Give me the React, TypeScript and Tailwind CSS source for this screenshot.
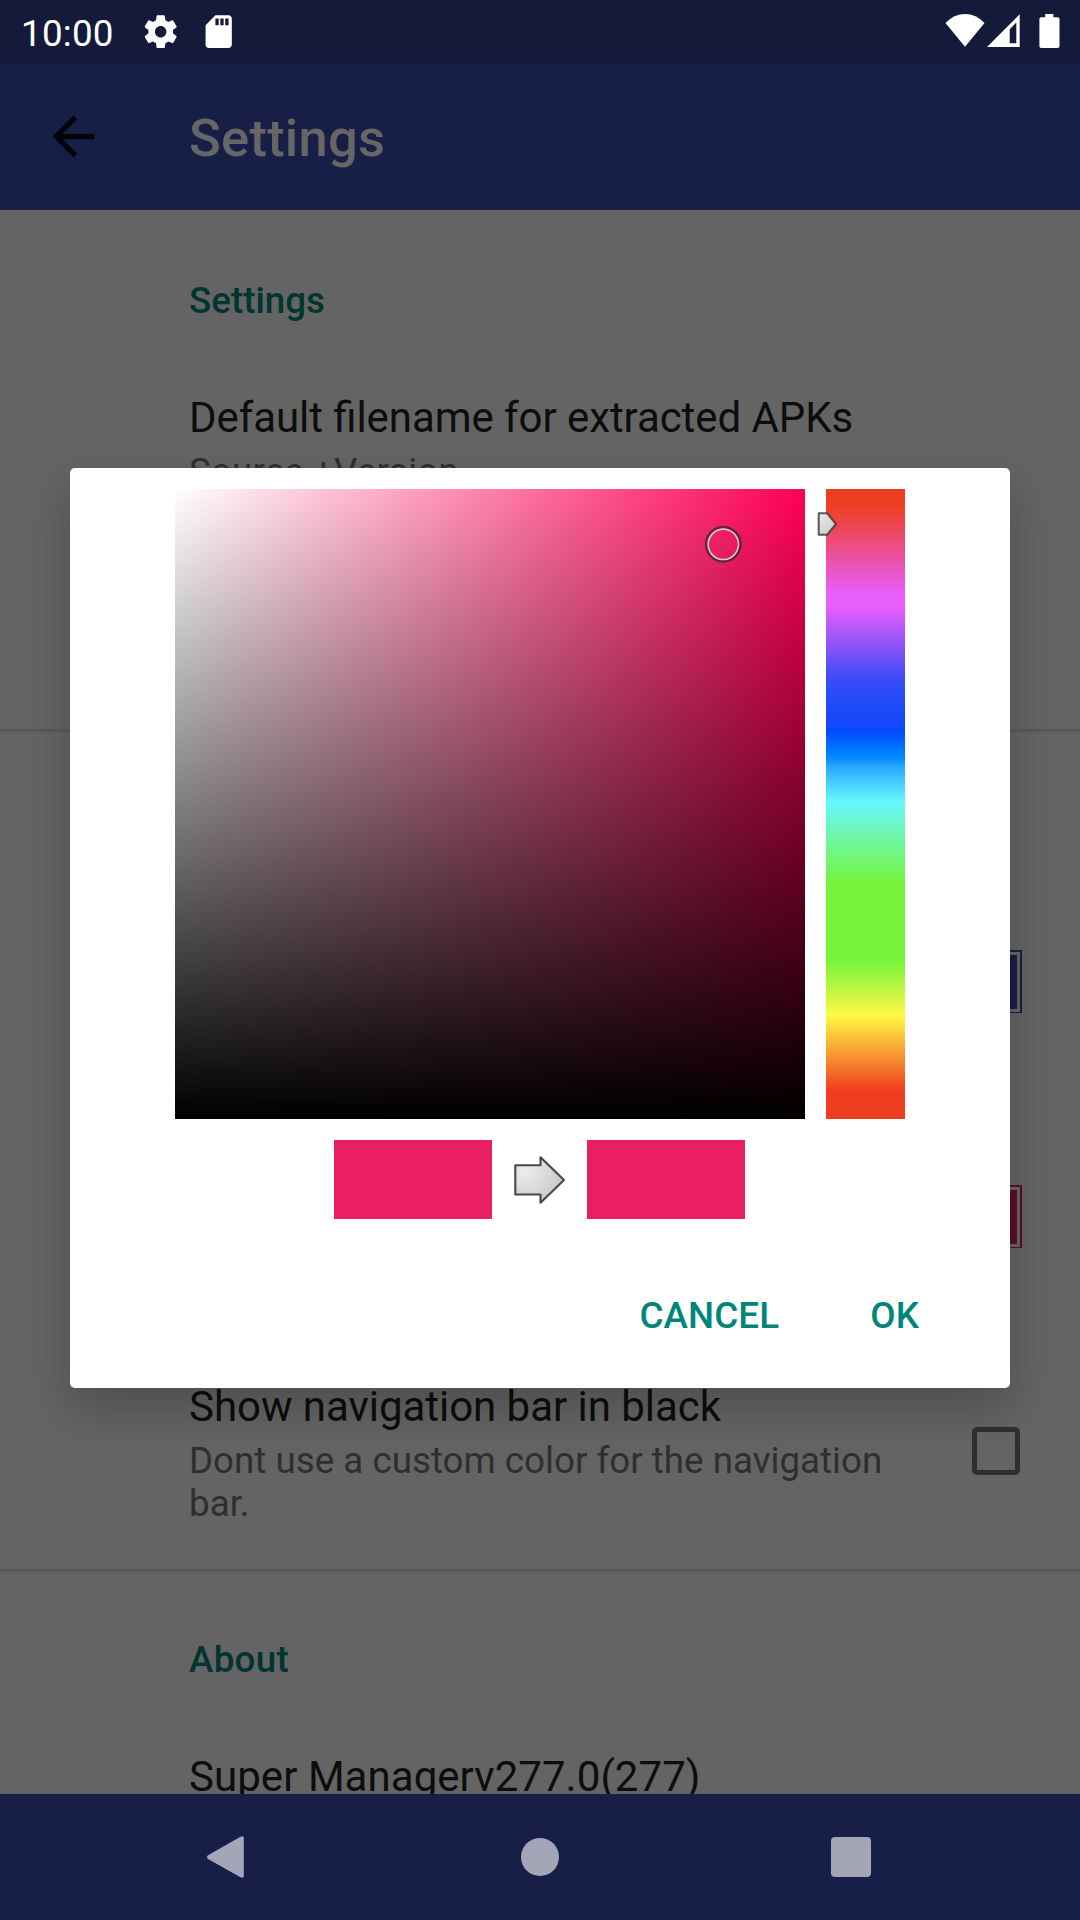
import React from "react";

function StatusBar() {
  return (
    <header className="flex h-[63px] items-start bg-[#141a39] pl-[21px] text-white">
      <div className="mt-[12px] w-[120px] text-[36.75px] leading-[43px] tracking-[0.25px]">10:00</div>
      <svg className="mt-[12px] h-[39.4px] w-[39.4px]" viewBox="0 0 24 24" fill="currentColor">
        <path d="M19.43 12.98c.04-.32.07-.64.07-.98s-.03-.66-.07-.98l2.11-1.65c.19-.15.24-.42.12-.64l-2-3.46c-.12-.22-.39-.3-.61-.22l-2.49 1c-.52-.4-1.08-.73-1.69-.98l-.38-2.65C14.46 2.18 14.25 2 14 2h-4c-.25 0-.46.18-.49.42l-.38 2.65c-.61.25-1.17.59-1.69.98l-2.49-1c-.23-.09-.49 0-.61.22l-2 3.46c-.13.22-.07.49.12.64l2.11 1.65c-.04.32-.07.65-.07.98s.03.66.07.98l-2.11 1.65c-.19.15-.24.42-.12.64l2 3.46c.12.22.39.3.61.22l2.49-1c.52.4 1.08.73 1.69.98l.38 2.65c.03.24.24.42.49.42h4c.25 0 .46-.18.49-.42l.38-2.65c.61-.25 1.17-.59 1.69-.98l2.49 1c.23.09.49 0 .61-.22l2-3.46c.12-.22.07-.49-.12-.64l-2.11-1.65zM12 15.5c-1.93 0-3.5-1.57-3.5-3.5s1.57-3.5 3.5-3.5 3.5 1.57 3.5 3.5-1.57 3.5-3.5 3.5z" />
      </svg>
      <svg className="mt-[12px] ml-[18.5px] h-[39.4px] w-[39.4px]" viewBox="0 0 24 24" fill="currentColor">
        <path d="M18 2h-8L4.02 8 4 20c0 1.1.9 2 2 2h12c1.1 0 2-.9 2-2V4c0-1.1-.9-2-2-2zm-6 6h-2V4h2v4zm3 0h-2V4h2v4zm3 0h-2V4h2v4z" />
      </svg>
      <div className="mt-[14px] mr-[20.5px] ml-auto flex items-start">
        <svg className="h-[34px] w-[40px]" viewBox="0 0 40 34" fill="currentColor">
          <path d="M0.5 9Q9 0 20 0T39.5 9L20 32.7Z" />
        </svg>
        <svg className="ml-[2.5px] h-[34px] w-[33px]" viewBox="0 0 33 34" fill="currentColor">
          <path fillRule="evenodd" d="M0 33H32.7V0.3ZM22.7 29.3V15.3L29.3 8.5V29.3Z" />
        </svg>
        <svg className="ml-[18.5px] h-[34px] w-[21px]" viewBox="0 0 21 34" fill="currentColor">
          <path d="M6.2 0H14.4V3.3H18.6Q20.5 3.3 20.5 5V32.2Q20.5 33.9 18.6 33.9H2.2Q0.4 33.9 0.4 32.2V5Q0.4 3.3 2.2 3.3H6.2Z" />
        </svg>
      </div>
    </header>
  );
}

function AppBar() {
  return (
    <div className="flex h-[147px] items-center bg-[#181f46] pl-[42px]">
      <svg className="h-[63px] w-[63px]" viewBox="0 0 24 24" fill="#030409">
        <path d="M20 11H7.83l5.59-5.59L12 4l-8 8 8 8 1.41-1.41L7.83 13H20v-2z" />
      </svg>
      <h1 className="mt-[3px] ml-[84px] text-[52.5px] leading-[62px] font-medium tracking-[0.25px] text-[#666666]">
        Settings
      </h1>
    </div>
  );
}

function Category({ children }: { children: React.ReactNode }) {
  return <h2 className="text-[36.75px] leading-[43px] font-medium text-[#00362f]">{children}</h2>;
}

function Title({ children }: { children: React.ReactNode }) {
  return (
    <div className="text-[42px] leading-[49px] tracking-[-0.04px] whitespace-nowrap text-[#0d0d0d]">{children}</div>
  );
}

function Summary({ children }: { children: React.ReactNode }) {
  return <div className="mt-2 text-[36.75px] leading-[43px] text-[#2f2f2f]">{children}</div>;
}

function SettingsList() {
  return (
    <main className="flex h-[1584px] flex-col overflow-hidden bg-[#646464]">
      <section className="h-[522px] shrink-0 border-b-[3px] border-[#595959] pt-[69px] pl-[189px]">
        <Category>Settings</Category>
        <div className="mt-[71px]">
          <Title>
            <span className="tracking-[-0.07px] [font-feature-settings:'liga'_1]">
              Default filename for extracted APKs
            </span>
          </Title>
          <Summary>
            <span className="tracking-[0.15px]">Source +Version</span>
          </Summary>
        </div>
      </section>

      <section className="h-[840px] shrink-0 border-b-[3px] border-[#595959] pt-[218px] pr-[58px] pl-[189px]">
        <div className="flex h-[235px] items-start justify-end">
          <div className="h-[63px] w-[63px] border-2 border-b border-[#181f46] bg-[#666666] p-[3px]">
            <div className="h-full bg-[#181f46]" />
          </div>
        </div>
        <div className="flex h-[197px] items-start justify-end">
          <div className="h-[63px] w-[63px] border-2 border-b border-[#5d0c28] bg-[#666666] p-[3px]">
            <div className="h-full bg-[#5d0c28]" />
          </div>
        </div>
        <div className="flex items-start justify-between">
          <div className="w-[720px]">
            <Title>Show navigation bar in black</Title>
            <Summary>Dont use a custom color for the navigation bar.</Summary>
          </div>
          <div className="mt-[45px] mr-[2px] h-[48px] w-[48px] rounded-[5px] border-[5.25px] border-[#2f2f2f]" />
        </div>
      </section>

      <section className="shrink-0 pt-[66px] pl-[189px]">
        <Category>
          <span className="tracking-[0.3px]">About</span>
        </Category>
        <div className="mt-[71px]">
          <Title>
            <span className="tracking-[0.05px]">Super Managerv277.0(277)</span>
          </Title>
        </div>
      </section>
    </main>
  );
}

function NavigationBar() {
  return (
    <nav className="flex h-[126px] items-center bg-[#181f46] pl-[206px] text-[#a3a6b6]">
      <svg className="h-[44px] w-[40px]" viewBox="0 0 40 44" fill="currentColor">
        <path d="M2 20.3L34.5 1.7Q37.8 0.5 37.8 3V41Q37.8 43.5 34.5 42.3L2 23.9Q0 22 2 20.3Z" />
      </svg>
      <div className="ml-[275px] h-[38px] w-[38px] rounded-full bg-[#a3a6b6]" />
      <div className="ml-[272px] h-[40px] w-[40px] rounded-[4px] bg-[#a3a6b6]" />
    </nav>
  );
}

function ColorPickerDialog() {
  return (
    <div className="absolute inset-x-0 top-[63px] bottom-[127px] flex items-center justify-center">
      <div
        role="dialog"
        className="flex h-[920px] w-[940px] flex-col rounded-[5px] bg-white shadow-[0_20px_45px_rgba(0,0,0,0.22)]"
      >
        <div className="flex pt-[21px] pl-[105px]">
          <div className="relative h-[630px] w-[630px] bg-[linear-gradient(to_top,#000,transparent),linear-gradient(to_right,#fff,#ff0055)]">
            <svg className="absolute top-[35.5px] left-[529.3px] h-[38px] w-[38px]" viewBox="0 0 38 38" fill="none">
              <circle cx="19.3" cy="19.3" r="16.6" stroke="#3a2630" strokeOpacity="0.8" strokeWidth="3.4" />
              <circle cx="19.3" cy="19.3" r="15.2" stroke="#e0c3cc" strokeWidth="1.7" />
            </svg>
          </div>
          <div className="relative ml-[21px] h-[630px] w-[79px] bg-[linear-gradient(to_bottom,#ef3e1f_0%,#ef3e1f_2.5%,#e85efa_16.5%,#e85efa_18.7%,#3b4bf8_30.2%,#244bf8_33.2%,#1448fb_37.7%,#004cff_38.5%,#0089ff_42.6%,#2aa5ff_44%,#66f8ff_49.5%,#77f43a_62.6%,#77f43a_74.8%,#fff945_83.6%,#ef3e1f_95.5%)]">
            <svg className="absolute top-[22px] -left-[9px] h-[26px] w-[21px]" viewBox="0 0 21 26">
              <defs>
                <linearGradient id="pointerFill" x1="0" y1="0" x2="1" y2="1">
                  <stop offset="0" stopColor="#ededed" />
                  <stop offset="1" stopColor="#c4c4c4" />
                </linearGradient>
              </defs>
              <path
                d="M1.7 2.2H10L19 13L10 23.8H1.7Z"
                fill="url(#pointerFill)"
                stroke="#3c3c3c"
                strokeOpacity="0.85"
                strokeWidth="2"
                strokeLinejoin="round"
              />
            </svg>
          </div>
        </div>

        <div className="mt-[21px] ml-[264px] flex items-center">
          <div className="h-[79px] w-[158px] bg-[#e91e63]" />
          <svg className="ml-[21px] h-[52px] w-[53px]" viewBox="0 0 53 52">
            <defs>
              <radialGradient id="arrowFill" cx="0.2" cy="0.3" r="0.8">
                <stop offset="0" stopColor="#ededed" />
                <stop offset="1" stopColor="#cacaca" />
              </radialGradient>
            </defs>
            <path
              d="M2.3 11.3H27.5V3.3L51 26L27.5 48.7V40.5H2.3Z"
              fill="url(#arrowFill)"
              stroke="#484848"
              strokeWidth="2.1"
              strokeLinejoin="round"
            />
          </svg>
          <div className="ml-[21px] h-[79px] w-[158px] bg-[#e91e63]" />
        </div>

        <div className="mt-[75px] mr-[91px] flex justify-end gap-[91px] text-[36.75px] leading-[43px] font-medium tracking-[0.12px] text-[#008577]">
          <button>CANCEL</button>
          <button>OK</button>
        </div>
      </div>
    </div>
  );
}

export default function App() {
  return (
    <div className="relative h-[1920px] w-[1080px] overflow-hidden font-[Roboto,sans-serif]">
      <StatusBar />
      <AppBar />
      <SettingsList />
      <NavigationBar />
      <ColorPickerDialog />
    </div>
  );
}
